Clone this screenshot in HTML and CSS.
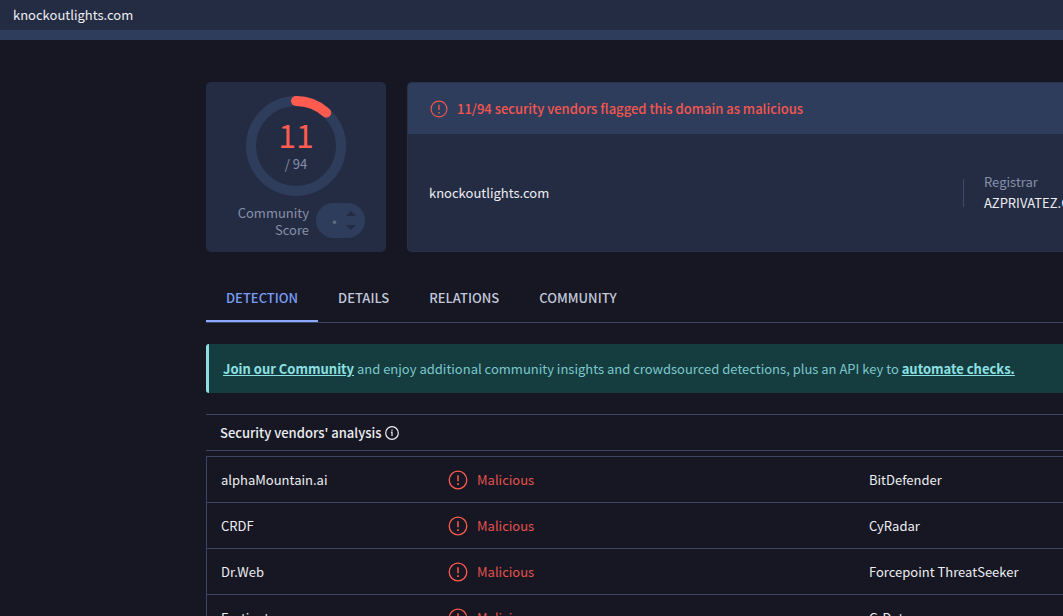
FILE: index.html
```html
<!DOCTYPE html>
<html lang="en">
<head>
<meta charset="utf-8">
<meta name="viewport" content="width=device-width, initial-scale=1">
<title>knockoutlights.com</title>
<link rel="stylesheet" href="styles.css">
</head>
<body>
<svg class="sprite" aria-hidden="true">
  <symbol id="alert" viewBox="0 0 20 20">
    <circle cx="10" cy="10" r="8.8" fill="none" stroke="currentColor" stroke-width="1.3"/>
    <path d="M10 5.2v6" stroke="currentColor" stroke-width="1.5"/>
    <path d="M10 13.2v1.7" stroke="currentColor" stroke-width="1.7"/>
  </symbol>
  <symbol id="info" viewBox="0 0 14 14">
    <circle cx="7" cy="7" r="6.3" fill="none" stroke="currentColor" stroke-width="1.2"/>
    <path d="M5.9 6.2H7v3.9M7 3.6v1.2" fill="none" stroke="currentColor" stroke-width="1.2"/>
  </symbol>
</svg>
<header class="topbar">knockoutlights.com</header>
<main class="page">
  <section class="summary">
    <div class="card score">
      <div class="gauge">
        <svg class="ring" viewBox="0 0 100 100" aria-hidden="true">
          <circle class="ring-track" cx="50" cy="50" r="45"/>
          <path class="ring-value" d="M50 5A45 45 0 0 1 80.2 16.6"/>
        </svg>
        <div class="gauge-text">
          <span class="gauge-count">11</span>
          <span class="gauge-total">/ 94</span>
        </div>
      </div>
      <div class="community">
        <span class="community-label">Community Score</span>
        <span class="votes">
          <svg viewBox="0 0 49 35" aria-hidden="true">
            <circle class="vote-dot" cx="18.5" cy="19.3" r="1.8"/>
            <path class="vote-arrow" d="M30 13l5-5 5 5zM30 22h10l-5 5z"/>
          </svg>
        </span>
      </div>
    </div>
    <div class="card report">
      <div class="verdict">
        <svg class="icon-verdict" aria-hidden="true"><use href="#alert"/></svg>
        <span>11/94 security vendors flagged this domain as malicious</span>
      </div>
      <div class="facts">
        <span class="domain">knockoutlights.com</span>
        <div class="registrar">
          <span class="registrar-label">Registrar</span>
          <span>AZPRIVATEZ.COM</span>
        </div>
      </div>
    </div>
  </section>

  <nav class="tabs">
    <a class="tab tab-active" href="#detection">DETECTION</a>
    <a class="tab" href="#details">DETAILS</a>
    <a class="tab" href="#relations">RELATIONS</a>
    <a class="tab" href="#community">COMMUNITY</a>
  </nav>

  <p class="banner"><a href="#join">Join our Community</a> and enjoy additional community insights and crowdsourced detections, plus an API key to <a href="#automate">automate checks.</a></p>

  <section id="detection">
    <h2 class="analysis-title">Security vendors' analysis <svg class="icon-info" aria-hidden="true"><use href="#info"/></svg></h2>
    <table class="vendors">
      <colgroup><col class="col-name"><col class="col-result"><col></colgroup>
      <tbody>
        <tr><td>alphaMountain.ai</td><td><span class="result"><svg class="icon-result" aria-hidden="true"><use href="#alert"/></svg>Malicious</span></td><td>BitDefender</td></tr>
        <tr><td>CRDF</td><td><span class="result"><svg class="icon-result" aria-hidden="true"><use href="#alert"/></svg>Malicious</span></td><td>CyRadar</td></tr>
        <tr><td>Dr.Web</td><td><span class="result"><svg class="icon-result" aria-hidden="true"><use href="#alert"/></svg>Malicious</span></td><td>Forcepoint ThreatSeeker</td></tr>
        <tr><td>Fortinet</td><td><span class="result"><svg class="icon-result" aria-hidden="true"><use href="#alert"/></svg>Malicious</span></td><td>G-Data</td></tr>
      </tbody>
    </table>
  </section>
</main>
</body>
</html>
```
FILE: styles.css
```css
* { box-sizing: border-box; }
html { background: #171723; scrollbar-width: none; }
body {
  margin: 0;
  overflow-x: hidden;
  color: #eceef2;
  font: 13px/20px "Noto Sans CJK SC", "Noto Sans", sans-serif;
}
a { color: inherit; }
.sprite { position: absolute; width: 0; height: 0; }
.topbar {
  padding: 5px 13px;
  border-bottom: 10px solid #2f3d5c;
  background: #242c43;
}
.page { padding: 42px 0 0 206px; }

.summary { display: flex; gap: 21px; }
.card { background: #242c43; border-radius: 5px; }
.score {
  display: flex;
  flex: 0 0 180px;
  flex-direction: column;
  align-items: center;
  gap: 7px;
  padding: 14px;
}
.gauge { display: grid; }
.gauge > * { grid-area: 1 / 1; }
.ring { width: 100px; height: 100px; fill: none; stroke-width: 10; }
.ring-track { stroke: #2f3d5c; }
.ring-value { stroke: #ff5b4f; stroke-linecap: round; }
.gauge-text {
  display: flex;
  flex-direction: column;
  align-items: center;
  gap: 2px;
  padding-top: 20px;
}
.gauge-count { color: #ff5b4f; font-size: 32px; line-height: 36px; }
.gauge-total { color: #8490aa; }
.community { display: flex; align-items: center; gap: 7px; width: 138px; }
.community-label {
  flex: 1;
  color: #8490aa;
  line-height: 17px;
  text-align: right;
}
.votes {
  display: flex;
  width: 49px;
  height: 35px;
  border-radius: 18px;
  background: #2f3d5c;
}
.votes svg { width: 100%; height: 100%; }
.vote-dot { fill: #626d80; }
.vote-arrow { fill: #242c43; }

.report {
  display: flex;
  flex: 1;
  flex-direction: column;
  min-width: 0;
  overflow: hidden;
  border: 1px solid #28324b;
  border-right: 0;
  border-radius: 5px 0 0 5px;
}
.verdict {
  display: flex;
  align-items: center;
  gap: 9px;
  padding: 16px 22px 15px;
  background: #2f3d5c;
  color: #f4564f;
  font-weight: 500;
}
.icon-verdict { width: 18px; height: 18px; }
.facts {
  display: flex;
  flex: 1;
  align-items: center;
  justify-content: space-between;
  padding-left: 21px;
}
.registrar {
  display: flex;
  flex: 0 0 100px;
  flex-direction: column;
  gap: 1px;
  min-width: 0;
  padding-left: 21px;
  background: linear-gradient(#3e4b6b, #3e4b6b) left center / 1px 28px no-repeat;
  white-space: nowrap;
}
.registrar-label { color: #8490aa; }

.tabs {
  display: flex;
  margin-top: 22px;
  border-bottom: 1px solid #3a4664;
}
.tab {
  padding: 14px 20px 12px;
  border-bottom: 2px solid transparent;
  color: #c1c8d9;
  font-weight: 500;
  text-decoration: none;
}
.tab-active { border-color: #8aa9ff; color: #799df6; }

.banner {
  margin: 21px 0;
  padding: 15px 14px 14px;
  border-left: 3px solid #8fdde1;
  border-radius: 3px 0 0 3px;
  background: #153c3f;
  color: #7bc8cb;
}
.banner a { color: #8ce0e2; font-weight: 700; }

.analysis-title {
  display: flex;
  align-items: center;
  gap: 4px;
  margin: 0 0 5px;
  padding: 8px 14px 7px;
  border: solid #3a4664;
  border-width: 1px 0;
  font-size: 13px;
  font-weight: 500;
}
.icon-info { width: 14px; height: 14px; }
.vendors {
  width: 100%;
  border-collapse: separate;
  border-spacing: 0;
  border: solid #3a4664;
  border-width: 1px 0 0 1px;
  table-layout: fixed;
}
.vendors td {
  height: 46px;
  padding: 0 14px;
  border-bottom: 1px solid #3a4664;
}
.col-name { width: 227px; }
.col-result { width: 421px; }
.result { display: flex; align-items: center; gap: 9px; color: #e2524e; }
.icon-result { width: 20px; height: 20px; color: #ff5b4f; }
```
